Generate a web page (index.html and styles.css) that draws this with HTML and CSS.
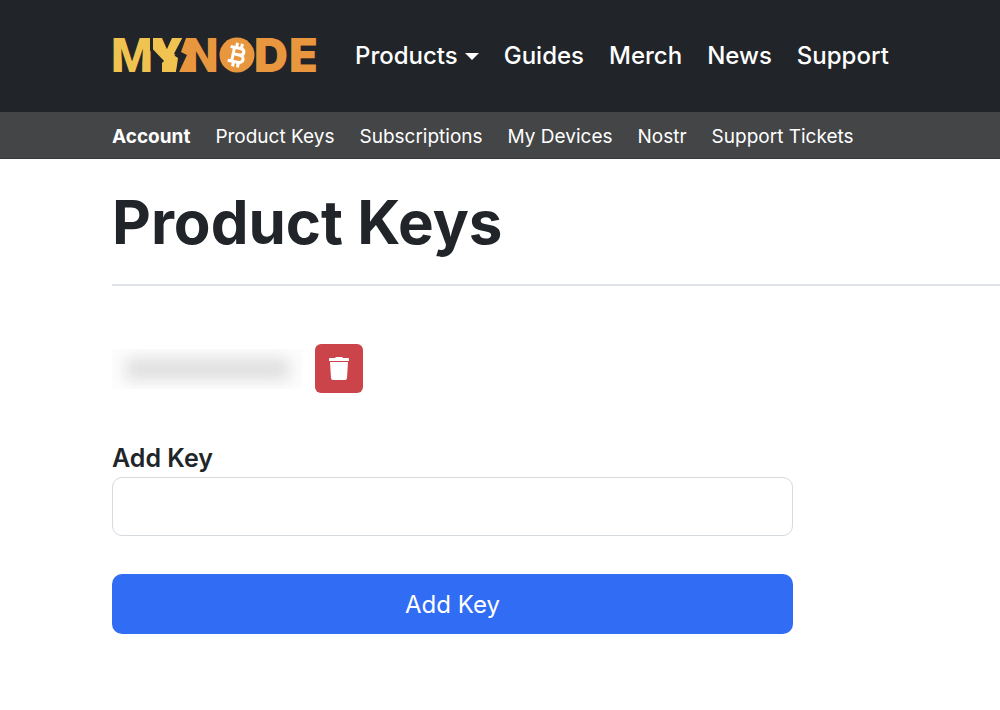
FILE: index.html
```html
<!DOCTYPE html>
<html lang="en">
<head>
<meta charset="utf-8">
<meta name="viewport" content="width=device-width, initial-scale=1">
<title>Product Keys</title>
<link rel="stylesheet" href="styles.css">
</head>
<body>
<header class="navbar">
  <a class="brand" href="#" aria-label="MyNode">
    <svg class="logo" width="206" height="60" viewBox="0 0 206 60">
      <g class="logo-start">
        <text class="gold" x="-1" y="46">M</text>
        <text class="gold" x="41" y="46">Y</text>
        <text class="orange" x="73" y="46">N</text>
      </g>
      <g class="logo-end">
        <text class="orange" x="142" y="46">D</text>
        <text class="orange" x="177" y="46">E</text>
      </g>
      <path class="gold" d="M41 12H49L56 26 51 35 41 24ZM70 12 60 28 66 32 64 46H50V34L60 12Z"/>
      <path class="orange" d="M74 12H80L84 46H67L75 29 69 26Z"/>
      <path class="logo-gap" d="M72.500 11 64 27 71 30.500 65 47"/>
      <path class="logo-gap" d="M39.500 11V24L51 36"/>
      <circle class="orange" cx="125" cy="29" r="17.5"/>
      <g class="coin-mark" transform="translate(125 29) rotate(12)">
        <path d="M-8-7H2C7.500-7 7.500-.5 2-.5H-3M2-.5C8.500-.5 8.500 7 2 7H-8M-4-7V7"/>
        <path d="M-2-12V-7M3-12V-7M-2 7V12M3 7V12"/>
      </g>
    </svg>
  </a>
  <nav class="main-nav" aria-label="Main">
    <a class="dropdown" href="#">Products</a>
    <a href="#">Guides</a>
    <a href="#">Merch</a>
    <a href="#">News</a>
    <a href="#">Support</a>
  </nav>
</header>
<nav class="sub-nav" aria-label="Account">
  <a class="current" href="#">Account</a>
  <a href="#">Product Keys</a>
  <a href="#">Subscriptions</a>
  <a href="#">My Devices</a>
  <a href="#">Nostr</a>
  <a href="#">Support Tickets</a>
</nav>
<main class="content">
  <h1>Product Keys</h1>
  <hr>
  <div class="key-row">
    <div class="key-mask" role="img" aria-label="Hidden product key"><span class="key-blur"></span></div>
    <button class="delete" type="button" aria-label="Delete key">
      <svg width="20" height="24" viewBox="0 0 20 24"><path d="M7 0H13L14 1H19Q20 1 20 2V4H0V2Q0 1 1 1H6ZM1 5H19L18 21Q18 23 16 23H4Q2 23 2 21Z"/></svg>
    </button>
  </div>
  <form class="key-form">
    <label for="key">Add Key</label>
    <input id="key" type="text">
    <button class="submit" type="button">Add Key</button>
  </form>
</main>
</body>
</html>
```
FILE: styles.css
```css
* { box-sizing: border-box; }
body {
  margin: 0;
  background: #fff;
  color: #212529;
  font: 24px/40px Inter, "Liberation Sans", sans-serif;
}
a { color: #fff; text-decoration: none; }
.navbar {
  display: flex;
  align-items: center;
  gap: 37px;
  min-height: 112px;
  padding: 0 112px;
  background: #212529;
}
.brand, .logo { display: block; }
.brand { flex: none; }
.logo-start { font: 900 48px Roboto, sans-serif; }
.logo-end { font: 900 47px Inter, sans-serif; }
.gold { fill: #f0c351; }
.orange { fill: #e9973e; }
.logo-gap { fill: none; stroke: #212529; stroke-width: 3; }
.coin-mark { fill: none; stroke: #fff; stroke-width: 3; }
.main-nav { display: flex; gap: 25px; font-weight: 500; }
.dropdown { display: flex; align-items: center; gap: 7px; }
.dropdown::after {
  content: "";
  border: 7px solid transparent;
  border-top-color: #fff;
  border-bottom: 0;
}
.sub-nav {
  display: flex;
  align-items: center;
  gap: 25px;
  min-height: 47px;
  padding: 3px 112px 0;
  background: #444546;
  border-bottom: 1px solid #383939;
  font-size: 19px;
}
.current { font-weight: 700; }
.content { padding: 26px 0 26px 112px; }
h1 { margin: 0; font-size: 60px; line-height: 74px; font-weight: 700; }
hr { margin: 25px 0 58px; border: 0; border-top: 2px solid #dee2e6; }
.key-row { display: flex; align-items: center; gap: 12px; }
.key-mask {
  width: 191px;
  height: 40px;
  padding: 10px 14px;
  background: #fdfdfd;
  overflow: hidden;
}
.key-blur { display: block; height: 20px; background: #dcdcdc; filter: blur(8px); }
.delete {
  display: grid;
  place-items: center;
  width: 48px;
  height: 49px;
  padding: 0;
  border: 0;
  border-radius: 6px;
  background: #cb444a;
}
.delete svg { fill: #fff; }
.key-form {
  display: flex;
  flex-direction: column;
  width: 77%;
  max-width: 681px;
  margin-top: 46px;
}
.key-form label { font-size: 25px; font-weight: 600; line-height: 38px; }
.key-form input {
  width: 100%;
  height: 59px;
  padding: 8px 16px;
  border: 1px solid #d5dadf;
  border-radius: 10px;
  font: inherit;
}
.submit {
  height: 60px;
  margin-top: 38px;
  padding: 2px 16px 0;
  border: 0;
  border-radius: 10px;
  background: #316cf4;
  color: #fff;
  font: inherit;
}
```
